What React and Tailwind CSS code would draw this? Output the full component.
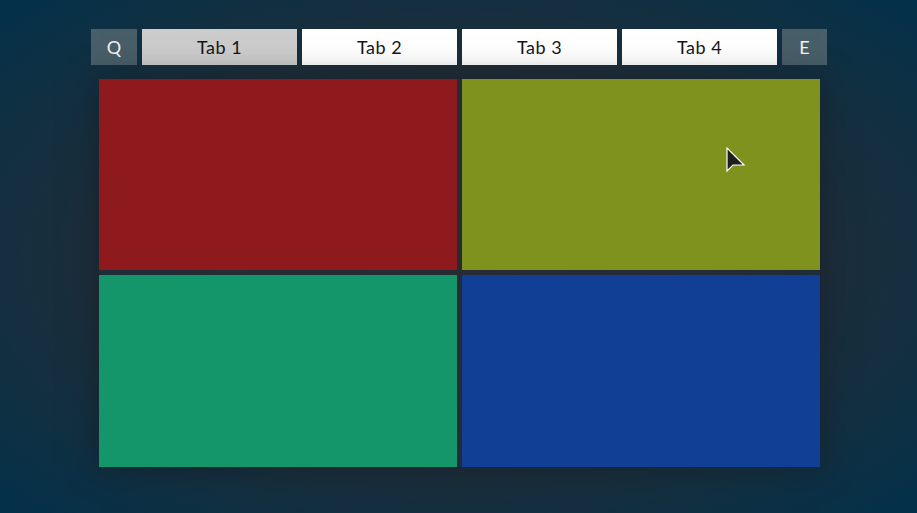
import React from 'react';

const tabs = ['Tab 1', 'Tab 2', 'Tab 3', 'Tab 4'];

const App = () => {
  return (
    <div className="relative w-[917px] h-[513px] overflow-hidden bg-[radial-gradient(ellipse_at_center,#272b33_0%,#232c36_45%,#0f3043_80%,#03304b_100%)] font-['Lato',sans-serif]">
      <div className="flex flex-col items-center pt-[29px]">
        {/* Tab bar */}
        <div className="flex gap-[5px] h-[36px] ml-[1px]">
          <div className="w-[46px] flex items-center justify-center bg-[#485e68] text-[#f2f2f2] text-[18px]">Q</div>
          {tabs.map((t, i) => (
            <div
              key={t}
              className={
                i === 0
                  ? 'w-[155px] flex items-center justify-center bg-[#cccccc] text-[#161616] text-[18px] tracking-[0.5px]'
                  : 'w-[155px] flex items-center justify-center bg-white text-[#161616] text-[18px] tracking-[0.5px]'
              }
            >
              {t}
            </div>
          ))}
          <div className="w-[45px] flex items-center justify-center bg-[#485e68] text-[#f2f2f2] text-[18px]">E</div>
        </div>

        {/* Panels */}
        <div className="mt-[14px] grid grid-cols-[358px_358px] grid-rows-[191px_192px] gap-[5px] ml-[2px] shadow-[0_0_30px_rgba(20,24,30,0.5)]">
          <div className="bg-[#8f1a1e]" />
          <div className="bg-[#80921e]" />
          <div className="bg-[#14956a]" />
          <div className="bg-[#123f96]" />
        </div>
      </div>

      {/* mouse cursor */}
      <svg className="absolute left-[726px] top-[147px]" width="20" height="27" viewBox="0 0 20 27">
        <path d="M1 1 L1 24 L7 18 L18 18 Z" fill="#1e1e1e" stroke="#ffffff" strokeWidth="1.2" strokeLinejoin="miter" />
      </svg>
    </div>
  );
};

export default App;
